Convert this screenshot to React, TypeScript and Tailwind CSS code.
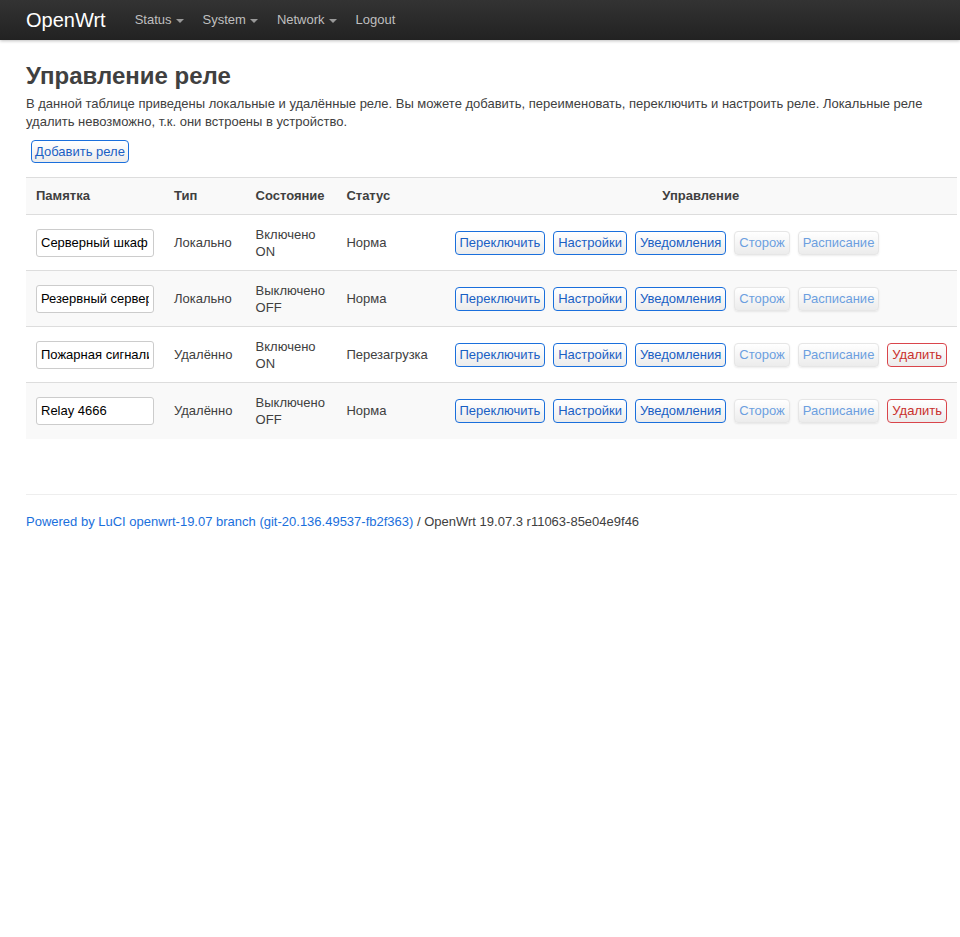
import React from "react";

const rows = [
  { name: "Серверный шкаф", type: "Локально", state: ["Включено", "ON"], status: "Норма", del: false },
  { name: "Резервный сервер", type: "Локально", state: ["Выключено", "OFF"], status: "Норма", del: false },
  { name: "Пожарная сигнализация", type: "Удалённо", state: ["Включено", "ON"], status: "Перезагрузка", del: true },
  { name: "Relay 4666", type: "Удалённо", state: ["Выключено", "OFF"], status: "Норма", del: true },
];

function Caret() {
  return <span className="inline-block ml-[4px] align-middle w-0 h-0 border-l-[4px] border-r-[4px] border-t-[4px] border-l-transparent border-r-transparent border-t-[#999]" />;
}

function Btn({ children, kind }: { children: React.ReactNode; kind: "blue" | "dis" | "red" }) {
  const cls =
    kind === "blue"
      ? "border-[#1a6fdc] text-[#1a5fc4]"
      : kind === "red"
      ? "border-[#d9454b] text-[#c9302c]"
      : "border-[#e6e6e6] text-[#6c9fe0]";
  return (
    <span
      className={`inline-block h-[24px] leading-[22px] px-[4px] border rounded-[4px] bg-gradient-to-b from-white to-[#ececec] text-[13px] ${cls} ${kind === "dis" ? "shadow-[0_1px_2px_rgba(0,0,0,0.08)]" : ""}`}
    >
      {children}
    </span>
  );
}

export default function App() {
  return (
    <div className="min-h-[937px] bg-white text-[#404040] text-[13px] leading-[18px]" style={{ fontFamily: '"Liberation Sans", Arial, Helvetica, sans-serif' }}>
      <div className="h-[40px] bg-gradient-to-b from-[#333] to-[#222] flex items-center pl-[26px] shadow-[0_1px_3px_rgba(0,0,0,0.25)]">
        <span className="text-white text-[20px] mr-[29px]">OpenWrt</span>
        <div className="flex items-center gap-[19px] text-[#bfbfbf] text-[13px]">
          <span>Status<Caret /></span>
          <span>System<Caret /></span>
          <span>Network<Caret /></span>
          <span>Logout</span>
        </div>
      </div>
      <div className="pl-[26px] pr-[3px]">
        <h2 className="mt-[18px] text-[24px] leading-[36px] font-bold text-[#404040]">Управление реле</h2>
        <p className="leading-[18px] mt-[1px] pr-[20px]">
          В данной таблице приведены локальные и удалённые реле. Вы можете добавить, переименовать, переключить и настроить реле. Локальные реле удалить невозможно, т.к. они встроены в устройство.
        </p>
        <div className="mt-[9px] ml-[5px]">
          <span className="inline-block h-[23px] leading-[21px] px-[3px] border border-[#1a6fdc] rounded-[4px] bg-gradient-to-b from-white to-[#ececec] text-[#1a5fc4]">Добавить реле</span>
        </div>
        <table className="mt-[14px] w-[931px] border-collapse">
          <thead>
            <tr className="bg-[#f9f9f9] border-t border-[#ddd] h-[37px]">
              <th className="w-[138px] text-left font-bold px-[10px]">Памятка</th>
              <th className="w-[82px] text-left font-bold px-[10px]">Тип</th>
              <th className="w-[91px] text-left font-bold px-[10px]">Состояние</th>
              <th className="w-[109px] text-left font-bold px-[10px]">Статус</th>
              <th className="text-center font-bold px-[10px]">Управление</th>
            </tr>
          </thead>
          <tbody>
            {rows.map((r, i) => (
              <tr key={i} className={`h-[56px] border-t border-[#ddd] ${i % 2 === 1 ? "bg-[#f9f9f9]" : "bg-white"}`}>
                <td className="px-[10px] align-middle">
                  <input
                    readOnly
                    value={r.name}
                    className="w-[118px] h-[28px] px-[4px] border border-[#ccc] rounded-[3px] bg-white text-[13px] text-black outline-none"
                    style={{ fontFamily: '"Liberation Sans", Arial, sans-serif' }}
                  />
                </td>
                <td className="px-[10px]">{r.type}</td>
                <td className="px-[10px] leading-[17px] pt-[1px]">
                  {r.state[0]}
                  <br />
                  {r.state[1]}
                </td>
                <td className="px-[10px]">{r.status}</td>
                <td className="pl-[10px] pr-[10px]">
                  <div className="flex gap-[8px]">
                    <Btn kind="blue">Переключить</Btn>
                    <Btn kind="blue">Настройки</Btn>
                    <Btn kind="blue">Уведомления</Btn>
                    <Btn kind="dis">Сторож</Btn>
                    <Btn kind="dis">Расписание</Btn>
                    {r.del && <Btn kind="red">Удалить</Btn>}
                  </div>
                </td>
              </tr>
            ))}
          </tbody>
        </table>
        <div className="mt-[55px] border-t border-[#eee] pt-[18px]">
          <span className="text-[#1a6fdc]">Powered by LuCI openwrt-19.07 branch (git-20.136.49537-fb2f363)</span>
          <span> / OpenWrt 19.07.3 r11063-85e04e9f46</span>
        </div>
      </div>
    </div>
  );
}
